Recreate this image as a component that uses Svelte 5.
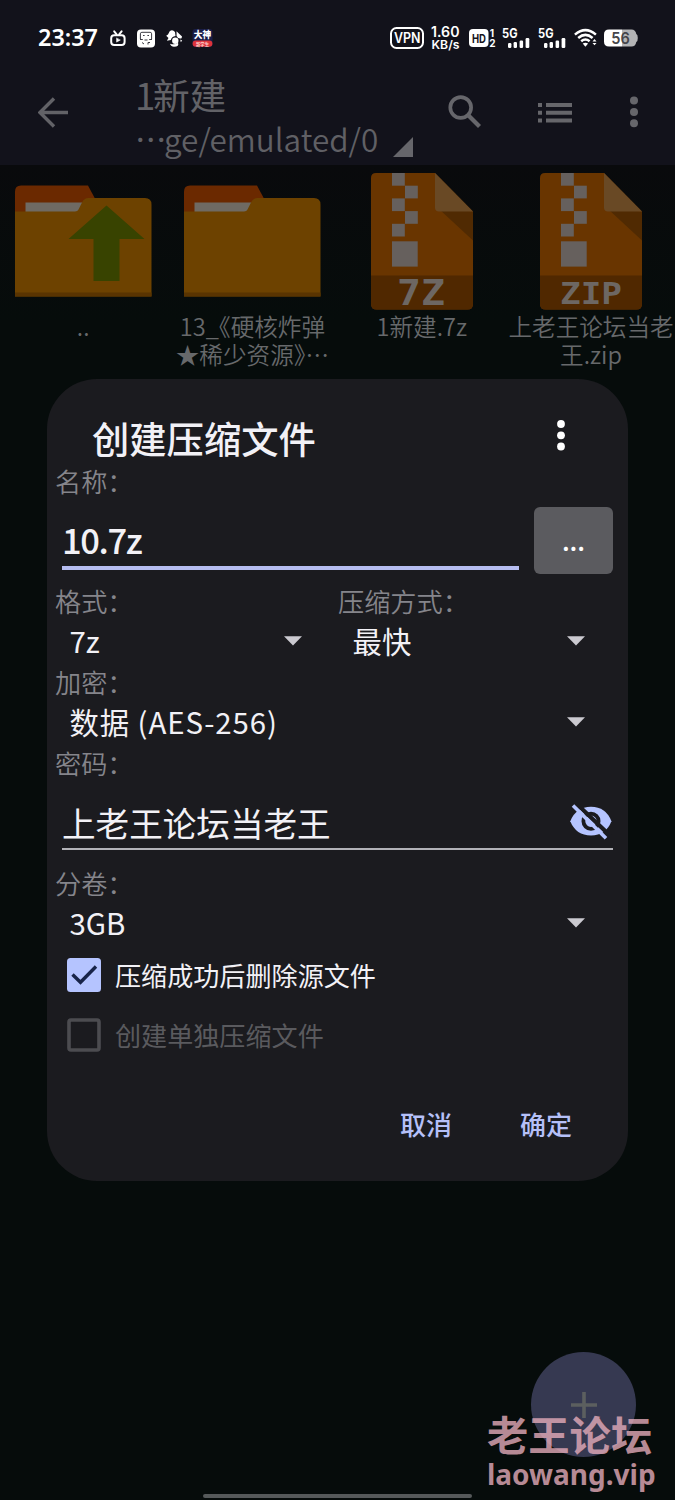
<script>
  const files = [
    { kind: 'up', lines: ['..'] },
    { kind: 'folder', lines: ['13_《硬核炸弹', '★稀少资源》⋯'] },
    { kind: '7Z', lines: ['1新建.7z'] },
    { kind: 'ZIP', lines: ['上老王论坛当老', '王.zip'] },
  ];
  const teeth = [[21, 0], [34, 12.7], [21, 25.4], [34, 38.1], [21, 50.8]];
  let name = $state('10.7z');
  let password = $state('上老王论坛当老王');
  let removeSource = $state(true);
</script>

{#snippet caret()}
  <svg class="caret" width="18" height="10" viewBox="0 0 18 10"><path d="M0 .3h18L9 9.5z" fill="#cbcad0" /></svg>
{/snippet}

{#snippet signal()}
  <svg class="signal" width="29" height="24" viewBox="0 0 29 24" fill="#fff">
    <text x="0" y="12" font-size="12.5" font-weight="700" textLength="15.5" lengthAdjust="spacingAndGlyphs">5G</text>
    <rect x="6" y="17" width="3.4" height="5" rx="1.2" /><rect x="11.6" y="16" width="3.4" height="6" rx="1.2" />
    <rect x="17.6" y="14.5" width="3.5" height="7.5" rx="1.2" /><rect x="23.6" y="12" width="3.7" height="10" rx="1.2" />
  </svg>
{/snippet}

<div class="screen">
  <header>
    <div class="status">
      <span class="clock">23:37</span>
      <svg class="tv" width="16" height="17" viewBox="0 0 16 17" fill="none" stroke="#fff" stroke-width="2" stroke-linecap="round" stroke-linejoin="round">
        <rect x="1.2" y="5.2" width="13.4" height="9.8" rx="3" /><path d="M4.2 1.3l2.4 3M11.6 1.3l-2.4 3" /><path d="M6.6 8.3v3.8l3.4-1.9z" fill="#fff" stroke-width=".6" />
      </svg>
      <svg class="face" width="18" height="19" viewBox="0 0 18 19">
        <rect y=".5" width="18" height="18" rx="4" fill="#fff" />
        <path d="M3.4 10V4.8q0-1.5 1.5-1.5h8.2q1.5 0 1.5 1.5V10M3 10.500h2.800M12.200 10.500H15M5 13.500l2 1.500M13 13.500h-2v2" fill="none" stroke="#3a3a42" stroke-width="1" />
        <path d="M6 6.500h1.600M10.400 6.500h1.600M7.500 11h3" fill="none" stroke="#3a3a42" stroke-width="1.200" />
      </svg>
      <svg class="bird" width="17" height="18" viewBox="0 0 17 18" fill="#fff">
        <path d="M3.700 2.200Q6.500.2 9 2.900l.5 4Q5.700 7.500 4.800 11l-3.900.8L2.500 9 .2 6.700 2 5.500z" />
        <path d="M10.500 2.200l5.500 5.300-.4 1.800q-3.500 1-5-2.400z" />
        <circle cx="9.300" cy="11.700" r="3.200" /><path d="M4 14.700q5 1.500 8-1 1.500 4-4 4-3 0-4-3z" /><path d="M14.200 10.600l2 .8-1.400 1.800z" />
      </svg>
      <svg class="badge" width="21" height="20" viewBox="0 0 21 20">
        <rect x=".5" y="1" width="20" height="18" rx="3" fill="#191d47" />
        <text x="1.800" y="10.400" font-size="9" font-weight="900" fill="#fff" textLength="17.500" lengthAdjust="spacingAndGlyphs">大神</text>
        <rect x=".6" y="12.400" width="19.800" height="6.400" rx="3" fill="#dd333b" />
        <text x="4" y="17.500" font-size="5" font-weight="700" fill="#ffd2cd" textLength="13" lengthAdjust="spacingAndGlyphs">新学生</text>
      </svg>

      <div class="right">
        <svg width="34" height="24" viewBox="0 0 34 24"><rect x="1" y="2" width="32" height="20" rx="5.500" fill="none" stroke="#fff" stroke-width="2" /><text x="4" y="17" font-size="14" font-weight="600" fill="#fff" textLength="26.500" lengthAdjust="spacingAndGlyphs">VPN</text></svg>
        <svg class="rate" width="29" height="26" viewBox="0 0 29 26" fill="#fff" font-weight="600"><text x="0" y="11.500" font-size="14" textLength="28.500" lengthAdjust="spacingAndGlyphs">1.60</text><text x=".5" y="23.500" font-size="12" textLength="28" lengthAdjust="spacingAndGlyphs">KB/s</text></svg>
        <svg class="hd" width="28" height="22" viewBox="0 0 28 22" fill="#fff"><rect y="2" width="19.500" height="18" rx="4" /><text x="3" y="15.500" font-size="12" font-weight="700" fill="#14141c" textLength="14" lengthAdjust="spacingAndGlyphs">HD</text><text x="20.800" y="9.500" font-size="10" font-weight="700">1</text><text x="20.300" y="20" font-size="10" font-weight="700">2</text></svg>
        {@render signal()}
        {@render signal()}
        <svg class="wifi" width="24" height="20" viewBox="0 0 24 20" fill="none" stroke="#fff" stroke-width="2.500">
          <path d="M.9 6.600q10.500-9 21 0M4.200 10q7.200-6.200 14.400 0M7.200 13.300q4.200-3.600 8.400 0" /><path d="M8.700 15.500q2.700-1.600 5.400 0L11.400 18.800z" fill="#fff" stroke="none" />
          <path d="M18.500 13.400l2-2.400 2 2.400zM18.500 14.900l2 2.400 2-2.400z" fill="#fff" stroke="none" />
        </svg>
        <svg class="battery" width="34" height="20" viewBox="0 0 34 20"><path d="M5 1.500h13v17H5q-5 0-5-5v-7q0-5 5-5z" fill="#fff" /><path d="M18 1.500h9.500q4 0 4.800 4.500 1.500.6 1.500 4t-1.500 4q-.8 4.500-4.800 4.500H18z" fill="#b3b3b5" /><text x="7.300" y="15.700" font-size="16" font-weight="600" fill="#45454a" textLength="18.500" lengthAdjust="spacingAndGlyphs">56</text></svg>
      </div>
    </div>

    <div class="toolbar">
      <svg class="back" width="31" height="31" viewBox="0 0 31 31" fill="none" stroke="#626267" stroke-width="3.400"><path d="M30 15.500H3M16 1.500L2 15.500l14 14" /></svg>
      <div class="where">
        <div class="folder-name"><span>1</span>新建</div>
        <div class="path"><div><span class="dots3" lang="zh-CN">⋯</span>ge/emulated/0</div><svg width="20" height="20" viewBox="0 0 20 20"><path d="M20 0v20H0z" fill="#66666b" /></svg></div>
      </div>
      <svg class="search" width="34" height="34" viewBox="0 0 34 34" fill="none" stroke="#66666b"><circle cx="12.700" cy="12.500" r="10.400" stroke-width="3.700" /><path d="M20 20l11.500 11.500" stroke-width="4.200" /></svg>
      <svg class="list" width="35" height="20" viewBox="0 0 35 20" fill="#66666b"><path d="M0 0h4v4H0zM8 0h26v4H8zM0 7.800h4v4H0zM8 7.800h26v4H8zM0 15.600h4v4H0zM8 15.600h26v4H8z" /></svg>
      <svg class="dots" width="8" height="32" viewBox="0 0 8 32" fill="#66666b"><circle cx="4" cy="4.500" r="4" /><circle cx="4" cy="16" r="4" /><circle cx="4" cy="27.300" r="4" /></svg>
    </div>
  </header>

  <main class="files">
    {#each files as f}
      <div class="file">
        {#if f.kind === 'up' || f.kind === 'folder'}
          <svg width="137" height="137" viewBox="0 0 137 137">
            <path d="M0 45V18.500q0-6 6-6h67l8 15V45z" fill="#6b2900" />
            <path d="M10.500 29.500H80V45H10.500z" fill="#6f6a63" />
            <path d="M0 38.500h60q2.500 0 3.500-2l3.500-7q2-4.500 6.500-4.500H130q6.500 0 6.500 6.500v92H0z" fill="#6d4200" />
            <path d="M0 119.500h136.500v4H0z" fill="#593401" />
            {#if f.kind === 'up'}<path d="M91.500 32.500L129.500 66h-25v42h-26V66H53.500z" fill="#384300" />{/if}
          </svg>
        {:else}
          <svg width="102" height="137" viewBox="0 0 102 137">
            <path d="M5 0h59l38 38.500V131q0 5.500-5.500 5.500h-91Q0 136.500 0 131V5q0-5 5-5z" fill="#693500" />
            <path d="M0 102.500h102V131q0 5.500-5.500 5.500h-91Q0 136.500 0 131z" fill="#502800" />
            <path d="M68 36l34 31.500v-29z" fill="#502a02" />
            <path d="M64 0l38 38.500H68q-4 0-4-4z" fill="#694925" />
            {#each teeth as [x, y]}<rect {x} {y} width="12.800" height="12.700" fill="#66605d" />{/each}
            <rect x="21" y="68.300" width="25.700" height="25.300" fill="#66605d" />
            <text class="ext" x={f.kind === '7Z' ? 26 : 20} y={f.kind === '7Z' ? 131.500 : 131} font-size={f.kind === '7Z' ? 35 : 31} textLength={f.kind === '7Z' ? 48 : 62} lengthAdjust="spacingAndGlyphs">{f.kind}</text>
          </svg>
        {/if}
        <div class="caption">{#each f.lines as l}<div>{l}</div>{/each}</div>
      </div>
    {/each}
  </main>

  <button class="fab" aria-label="+"><svg width="26" height="26" viewBox="0 0 26 26"><path d="M13 0v26M0 13h26" stroke="#5c5f5f" stroke-width="3.600" /></svg></button>

  <section class="dialog">
    <div class="head">
      <h1>创建压缩文件</h1>
      <svg width="8" height="31" viewBox="0 0 8 31" fill="#fff"><circle cx="4" cy="4" r="3.900" /><circle cx="4" cy="15.300" r="3.900" /><circle cx="4" cy="26.500" r="3.900" /></svg>
    </div>
    <div class="label">名称：</div>
    <div class="name-row">
      <input class="name" bind:value={name} />
      <button class="browse">...</button>
    </div>
    <div class="pair">
      <div><div class="label">格式：</div><div class="select"><span>7z</span>{@render caret()}</div></div>
      <div><div class="label">压缩方式：</div><div class="select"><span>最快</span>{@render caret()}</div></div>
    </div>
    <div class="label">加密：</div>
    <div class="select cipher"><span>数据 (AES-256)</span>{@render caret()}</div>
    <div class="label">密码：</div>
    <div class="pass-row">
      <input bind:value={password} />
      <svg width="42" height="36" viewBox="0 0 42 36">
        <path d="M.3 17.300Q6 2.800 21 2.800T41.400 17.300Q36 31.500 21 31.500T.3 17.300z" fill="#b5c4ff" />
        <circle cx="21" cy="17.300" r="7.600" fill="none" stroke="#1b1b1f" stroke-width="3.800" />
        <path d="M5.500-1.200L40.500 32" stroke="#1b1b1f" stroke-width="4.200" />
        <path d="M3 1.500L36 34.300" stroke="#b5c4ff" stroke-width="3.600" />
      </svg>
    </div>
    <div class="label">分卷：</div>
    <div class="select"><span>3GB</span>{@render caret()}</div>
    <label class="check first">
      <input type="checkbox" bind:checked={removeSource} />
      <svg width="34" height="34" viewBox="0 0 34 34"><rect width="34" height="34" rx="3.500" fill="#b5c4ff" />{#if removeSource}<path d="M5.500 16.500l8 7.800L29 8.500" fill="none" stroke="#182449" stroke-width="3.400" />{/if}</svg>
      <span>压缩成功后删除源文件</span>
    </label>
    <label class="check second">
      <svg width="34" height="34" viewBox="0 0 34 34"><rect x="2" y="2" width="30" height="30" rx="2" fill="none" stroke="#4c4c50" stroke-width="3.600" /></svg>
      <span>创建单独压缩文件</span>
    </label>
    <div class="actions"><button>取消</button><button>确定</button></div>
  </section>

  <div class="mark"><div class="cn">老王论坛</div><div class="site">laowang.vip</div></div>
  <div class="handle"></div>
</div>

<style>
  :global(body) { background: #070c0c; }
  .screen {
    position: relative; width: 675px; height: 1500px; overflow: hidden;
    background: linear-gradient(#090a0c 165px, #060c0b 320px);
    font-family: "Noto Sans CJK SC", "Noto Sans", sans-serif;
    box-sizing: border-box;
  }
  svg { display: block; flex: none; }
  .status svg { overflow: visible; }
  header { height: 165px; background: #12121b; }
  .status { display: flex; align-items: center; height: 76px; padding: 0 37px 0 38px; }
  .status svg text { font-family: Inter, "Noto Sans CJK SC", sans-serif; }
  .clock { width: 61px; color: #fff; font-size: 23.400px; font-weight: 600; line-height: 26px; margin-top: -2px; white-space: nowrap; font-family: "Noto Sans", sans-serif; }
  .tv { margin-left: 11px; }
  .face { margin-left: 11px; }
  .bird { margin-left: 11px; }
  .badge { margin-left: 9px; }
  .right { display: flex; align-items: center; margin-left: auto; }
  .rate { margin-left: 7px; }
  .hd { margin-left: 9px; }
  .signal { margin-left: 5px; }
  .signal + .signal { margin-left: 7px; }
  .wifi { margin-left: 7px; }
  .battery { margin-left: 6px; }
  .toolbar { display: flex; align-items: flex-start; height: 89px; color: #626267; }
  .back { margin: 21px 0 0 38px; }
  .where { width: 278px; margin-left: 66px; }
  .folder-name { font-size: 36.700px; line-height: 42px; margin-top: -3px; }
  .folder-name span { letter-spacing: -2.500px; }
  .path { display: flex; align-items: flex-end; justify-content: space-between; height: 42px; line-height: 46px; font-size: 31.500px; font-weight: 350; color: #606065; white-space: nowrap; }
  .path > div { display: flex; height: 42px; }
  .dots3 { width: 29px; display: block; font-weight: 400; }
  .search { margin: 19px 0 0 35px; }
  .list { margin: 27px 0 0 56px; }
  .dots { margin: 20px 0 0 56.500px; }
  .files { display: grid; grid-template-columns: repeat(4, 169.300px); margin-left: -1.500px; padding-top: 7.500px; }
  .file { display: flex; flex-direction: column; align-items: center; }
  .ext { font-family: "DejaVu Sans Mono", monospace; font-weight: 700; fill: #6d6763; }
  .caption { margin-top: 2px; text-align: center; white-space: nowrap; font-size: 23.600px; line-height: 28px; color: #67696b; font-weight: 350; font-feature-settings: "halt"; }
  .fab { position: absolute; left: 531px; top: 1352px; width: 105px; height: 105px; padding: 0; border: 0; border-radius: 50%; background: #363951; display: flex; align-items: center; justify-content: center; }
  .dialog {
    position: absolute; left: 47px; top: 379px; width: 581px; height: 802px; box-sizing: border-box;
    border-radius: 50px; background: #1b1b1f; color: #f2f1f6;
  }
  .head { display: flex; align-items: flex-start; justify-content: space-between; height: 87px; padding: 0 63px 0 45px; box-sizing: border-box; }
  h1 { margin: 32px 0 0; font-size: 37.300px; line-height: 54px; font-weight: 500; }
  .head svg { margin-top: 41px; }
  .label { height: 32px; line-height: 30px; padding-left: 8px; font-size: 26.200px; color: #85858b; font-weight: 350; white-space: nowrap; }
  .name-row { display: flex; align-items: flex-start; justify-content: space-between; height: 88px; padding: 8px 15px 0; box-sizing: border-box; }
  input { font-family: inherit; color: inherit; background: none; border: 0; outline: 0; border-radius: 0; box-sizing: border-box; margin: 0; padding: 0; font-size: 33.600px; }
  .name { width: 457px; height: 64px; padding-top: 6px; border-bottom: 4px solid #b6bdf0; font-weight: 500; font-size: 34.500px; letter-spacing: -1.400px; }
  .browse { width: 79px; height: 67px; margin-top: 1px; padding: 0 0 2px; border: 0; border-radius: 6px; background: #5b5b5f; color: #fff; font: 500 26px "Noto Sans CJK SC", sans-serif; }
  .pair { display: grid; grid-template-columns: 283px 1fr; }
  .pair > div:first-child .select { padding-right: 28px; }
  .select { display: flex; align-items: center; justify-content: space-between; height: 49px; padding: 0 43.500px 0 22.500px; font-size: 29.400px; line-height: 44px; }
  .select span { margin-top: -6px; }
  .cipher span { letter-spacing: .9px; }
  .caret { margin-top: -3px; }
  .pass-row { display: flex; align-items: center; height: 69.500px; margin: 0 15px 18.500px; box-sizing: border-box; border-bottom: 2px solid #b2b2b7; }
  .pass-row input { flex: 1; min-width: 0; height: 50px; margin-top: 17px; }
  .pass-row svg { margin: 17px 1.500px 0 0; }
  .check { display: flex; align-items: center; padding-left: 20px; gap: 14px; font-size: 26.100px; line-height: 32px; white-space: nowrap; }
  .check input { position: absolute; opacity: 0; }
  .first { height: 52px; }
  .second { height: 68px; color: #5a5a5e; }
  .actions { display: flex; justify-content: flex-end; gap: 68px; padding: 38px 56px 0 0; }
  .actions button { padding: 0; border: 0; background: none; color: #b5c0f8; font: 500 26px "Noto Sans CJK SC", sans-serif; line-height: 34px; }
  .mark { position: absolute; left: 487px; top: 1411px; color: rgba(232, 174, 188, .78); font-weight: 700; white-space: nowrap; }
  .cn { font-size: 41.300px; line-height: 44px; }
  .site { font: 700 28px "Noto Sans", sans-serif; line-height: 38px; }
  .handle { position: absolute; left: 203px; top: 1494px; width: 269px; height: 4px; border-radius: 2px; background: #55595a; }
</style>
